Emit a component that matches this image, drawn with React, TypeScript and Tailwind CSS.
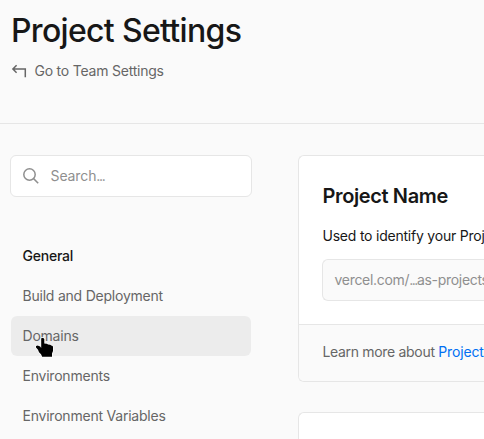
import React from 'react';

const navItems = [
  { label: 'General', style: 'font-medium text-[#171717] tracking-[-0.22px]' },
  { label: 'Build and Deployment', style: 'text-[#666666] tracking-[-0.22px]' },
  { label: 'Domains', style: 'text-[#666666] bg-[#ececec] tracking-[-0.22px]' },
  { label: 'Environments', style: 'text-[#666666] tracking-[-0.22px]' },
  { label: 'Environment Variables', style: 'text-[#666666] tracking-[-0.22px]' },
];

function BackIcon() {
  return (
    <svg width="16" height="16" viewBox="0 0 16 16" fill="none" stroke="#666666" strokeWidth="1.5" className="shrink-0">
      <path d="M5.6 2.3 1.9 6l3.7 3.7M2 6h12.3v8.2" />
    </svg>
  );
}

function SearchIcon() {
  return (
    <svg width="16" height="16" viewBox="0 0 16 16" fill="none" stroke="#8f8f8f" strokeWidth="1.5" className="shrink-0">
      <circle cx="6.5" cy="6.5" r="5.7" />
      <path d="m10.6 10.6 4.6 4.6" />
    </svg>
  );
}

function HandPointer() {
  return (
    <svg width="22" height="24" viewBox="0 0 22 24" className="pointer-events-none absolute left-[22px] top-5">
      <path
        d="M8.5 2h1.8l1 1v4.5l2.7.3 1 .7 2.3.2 1 .8 1.4.5.3 1v4l-1 2.5v3.3H9.2l-1.2-2.5-2-2-1-2.5-2-2.3v-1.5l1.7-.5 2.5 1 1 1.5V3Z"
        fill="#000"
        stroke="#fff"
        strokeWidth="1.3"
        strokeLinejoin="round"
        paintOrder="stroke"
      />
    </svg>
  );
}

export default function App() {
  return (
    <div className="h-[439px] w-[484px] overflow-hidden bg-[#fafafa] font-[Inter,sans-serif] text-sm leading-5 text-[#171717]">
      <header className="h-[124px] border-b border-[#e6e6e6] pl-[11px] pt-[11px]">
        <h1 className="whitespace-nowrap text-[32px] font-medium leading-10 tracking-[-0.68px]">Project Settings</h1>
        <a className="mt-[10px] flex items-center gap-[7.5px] text-[#666666]">
          <BackIcon />
          <span className="whitespace-nowrap tracking-[-0.22px]">Go to Team Settings</span>
        </a>
      </header>
      <main className="flex gap-[46px] pl-[10px] pt-[31px]">
        <aside className="w-[242px] shrink-0">
          <div className="flex h-[42px] items-center gap-3 rounded-md border border-[#e6e6e6] bg-white pl-3 text-[#8f8f8f]">
            <SearchIcon />
            <span className="-ml-[0.5px] tracking-[-0.1px]">Search<span className="tracking-[-1.3px]">...</span></span>
          </div>
          <nav className="mt-[39px] px-px">
            {navItems.map((item) => (
              <div key={item.label} className={`relative flex h-10 items-center whitespace-nowrap rounded-md pl-[11.5px] ${item.style}`}>
                {item.label}
                {item.label === 'Domains' && <HandPointer />}
              </div>
            ))}
          </nav>
        </aside>
        <div className="w-[186px] shrink-0 overflow-hidden">
          <section className="h-[227px] overflow-hidden rounded-l-md border border-r-0 border-[#e6e6e6] bg-white">
            <div className="h-[168px] pl-6 pt-6">
              <h2 className="-ml-[0.5px] text-xl font-semibold leading-8 tracking-[-0.38px]">Project Name</h2>
              <p className="-ml-[0.5px] mt-[14px] whitespace-nowrap tracking-[-0.22px]">Used to identify your Proj</p>
              <div className="-ml-px mt-[13px] flex h-[42px] items-center overflow-hidden whitespace-nowrap rounded-l-md border border-r-0 border-[#e6e6e6] bg-[#fafafa] pl-[11.5px] tracking-[-0.3px] text-[#8f8f8f]">
                <span>vercel.com/<span className="tracking-[-1.5px]">...</span>as-projects</span>
              </div>
            </div>
            <footer className="flex h-[57px] items-center whitespace-nowrap border-t border-[#e6e6e6] bg-[#fafafa] pb-0.5 pl-[23.5px] text-[#666666]">
              <span className="tracking-[-0.32px]">Learn more about&nbsp;</span>
              <a className="tracking-[-0.15px] text-[#0070f3]">Project</a>
            </footer>
          </section>
          <section className="mt-[30px] h-20 rounded-l-md border border-r-0 border-[#e6e6e6] bg-white" />
        </div>
      </main>
    </div>
  );
}
